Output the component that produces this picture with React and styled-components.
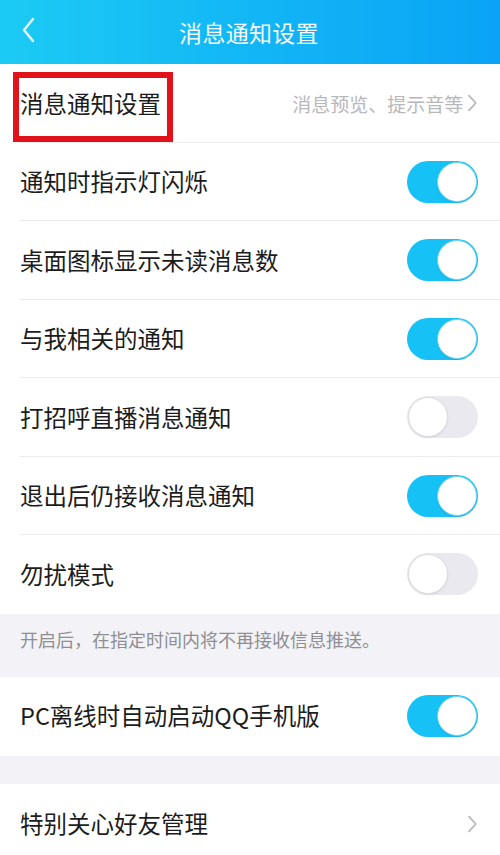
import React, { useState } from "react";
import styled, { createGlobalStyle } from "styled-components";

const GlobalStyle = createGlobalStyle`
  html, body {
    margin: 0;
    padding: 0;
    background: #f3f3f7;
  }
  body {
    font-family: "Noto Sans CJK SC", "Noto Sans", sans-serif;
  }
`;

const Page = styled.div`
  width: 500px;
  height: 855px;
  overflow: hidden;
  background: #f3f3f7;
`;

const Header = styled.header`
  height: 64px;
  display: flex;
  align-items: center;
  justify-content: center;
  position: relative;
  background: linear-gradient(90deg, #1ccbf4 0%, #12b6f5 50%, #0aa3f6 100%);
`;

const BackButton = styled.div`
  position: absolute;
  left: 21px;
  top: 16px;
  width: 20px;
  height: 28px;
  display: flex;
  align-items: center;
`;

const HeaderTitle = styled.h1`
  margin: 0 0 0 -2px;
  color: #f4fbff;
  font-size: 23px;
  font-weight: 400;
  letter-spacing: 0.3px;
  line-height: 1;
`;

const Group = styled.section`
  background: #fff;
`;

const Row = styled.div`
  position: relative;
  box-sizing: border-box;
  height: ${(p) => p.h || 78.5}px;
  display: flex;
  align-items: center;
  justify-content: space-between;
  padding: 0 22px 0 20px;

  &::after {
    content: "";
    display: ${(p) => (p.last ? "none" : "block")};
    position: absolute;
    left: 20px;
    right: 0;
    bottom: 0;
    height: 1px;
    background: #ececef;
  }
`;

const Label = styled.span`
  font-size: 23.5px;
  color: #1c1c1c;
  line-height: 1;
`;

const Hint = styled.span`
  display: flex;
  align-items: center;
  gap: 4px;
  font-size: 19px;
  color: #b8b8bc;
  line-height: 1;
`;

const Highlight = styled.div`
  position: absolute;
  left: 13px;
  top: 8px;
  width: 160px;
  height: 70px;
  box-sizing: border-box;
  border: 6px solid #e2121a;
`;

const Track = styled.button`
  position: relative;
  width: 71px;
  height: 42px;
  border-radius: 21px;
  border: none;
  padding: 0;
  cursor: pointer;
  background: ${(p) => (p.on ? "#16c1f5" : "#e9e9ef")};
  flex-shrink: 0;
`;

const Knob = styled.span`
  position: absolute;
  top: 1px;
  left: ${(p) => (p.on ? "30px" : "1px")};
  width: 40px;
  height: 40px;
  box-sizing: border-box;
  border-radius: 50%;
  background: #fff;
  border: 1px solid ${(p) => (p.on ? "#6fd4f2" : "#dcdce2")};
  box-shadow: 0 1px 2px rgba(0, 0, 0, 0.08);
`;

const Note = styled.div`
  height: 63px;
  box-sizing: border-box;
  padding: 13px 20px 0;
  font-size: 18px;
  color: #8e8e93;
  line-height: 1.4;
`;

const Gap = styled.div`
  height: ${(p) => p.h}px;
`;

function Chevron({ color = "#b8b8bc", size = 16 }) {
  return (
    <svg width={size * 0.6} height={size} viewBox="0 0 9 16" fill="none">
      <path
        d="M1.5 1.5 L7.5 8 L1.5 14.5"
        stroke={color}
        strokeWidth="1.6"
        strokeLinecap="round"
        strokeLinejoin="round"
      />
    </svg>
  );
}

function Switch({ initial }) {
  const [on, setOn] = useState(initial);
  return (
    <Track on={on ? 1 : 0} onClick={() => setOn(!on)}>
      <Knob on={on ? 1 : 0} />
    </Track>
  );
}

const toggles = [
  { label: "通知时指示灯闪烁", on: true },
  { label: "桌面图标显示未读消息数", on: true },
  { label: "与我相关的通知", on: true },
  { label: "打招呼直播消息通知", on: false },
  { label: "退出后仍接收消息通知", on: true },
  { label: "勿扰模式", on: false },
];

export default function App() {
  return (
    <Page>
      <GlobalStyle />
      <Header>
        <BackButton>
          <svg width="14" height="26" viewBox="0 0 14 26" fill="none">
            <path
              d="M12 2 L3 13 L12 24"
              stroke="#e6f8ff"
              strokeWidth="2.4"
              strokeLinecap="round"
              strokeLinejoin="round"
            />
          </svg>
        </BackButton>
        <HeaderTitle>消息通知设置</HeaderTitle>
      </Header>

      <Group>
        <Row>
          <Label>消息通知设置</Label>
          <Hint>
            消息预览、提示音等
            <Chevron size={18} />
          </Hint>
          <Highlight />
        </Row>
        {toggles.map((t, i) => (
          <Row key={t.label} last={i === toggles.length - 1}>
            <Label>{t.label}</Label>
            <Switch initial={t.on} />
          </Row>
        ))}
      </Group>

      <Note>开启后，在指定时间内将不再接收信息推送。</Note>

      <Group>
        <Row last h={79}>
          <Label>PC离线时自动启动QQ手机版</Label>
          <Switch initial={true} />
        </Row>
      </Group>

      <Gap h={28} />

      <Group>
        <Row last h={80}>
          <Label>特别关心好友管理</Label>
          <Chevron size={18} />
        </Row>
      </Group>
    </Page>
  );
}
